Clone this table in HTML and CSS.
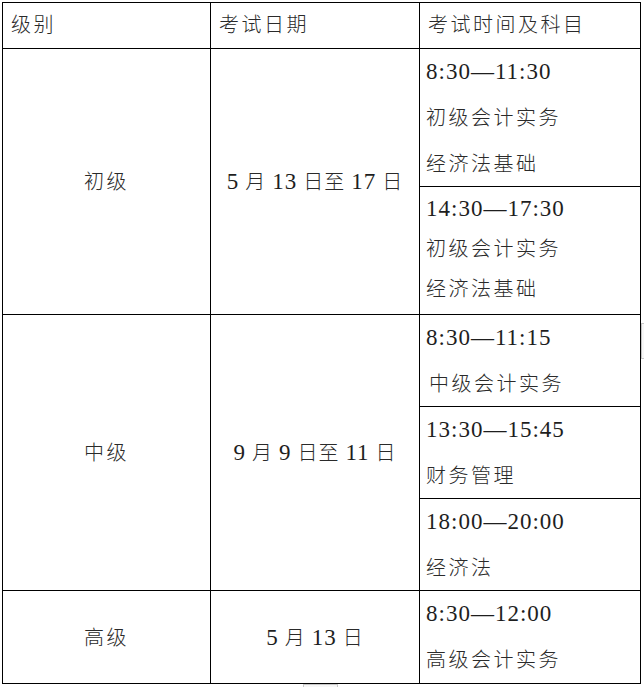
FILE: index.html
```html
<!DOCTYPE html>
<html lang="zh-CN">
<head>
<meta charset="utf-8">
<title>考试时间</title>
<link rel="stylesheet" href="styles.css">
</head>
<body>
<div class="page">
  <div class="sheet">
    <div class="cell head">级别</div>
    <div class="cell head">考试日期</div>
    <div class="cell head">考试时间及科目</div>

    <div class="cell merged span2"><span>初级</span></div>
    <div class="cell merged date span2"><span><span class="num">5</span> 月 <span class="num">13</span> 日至 <span class="num">17</span> 日</span></div>
    <div class="cell slot"><span class="time">8:30—11:30</span><br>初级会计实务<br>经济法基础</div>
    <div class="cell slot tight"><span class="time">14:30—17:30</span><br>初级会计实务<br>经济法基础</div>

    <div class="cell merged span3"><span>中级</span></div>
    <div class="cell merged date span3"><span><span class="num">9</span> 月 <span class="num">9</span> 日至 <span class="num">11</span> 日</span></div>
    <div class="cell slot"><span class="time">8:30—11:15</span><br><span class="indent">中级会计实务</span></div>
    <div class="cell slot"><span class="time">13:30—15:45</span><br>财务管理</div>
    <div class="cell slot"><span class="time">18:00—20:00</span><br>经济法</div>

    <div class="cell merged"><span>高级</span></div>
    <div class="cell merged date"><span><span class="num">5</span> 月 <span class="num">13</span> 日</span></div>
    <div class="cell slot"><span class="time">8:30—12:00</span><br>高级会计实务</div>
  </div>
  <span class="ghost ghost-bottom"></span>
  <span class="ghost ghost-right"></span>
</div>
</body>
</html>
```

FILE: styles.css
```css
html, body {
  margin: 0;
  padding: 0;
  background: #ffffff;
}

.page {
  position: relative;
  width: 644px;
  height: 687px;
  overflow: hidden;
}

.sheet {
  display: grid;
  grid-template-columns: 207px 208px 220px;
  grid-template-rows: 45px 137px 127px 91px 91px 91px 92px;
  gap: 1px;
  padding: 1px;
  background: #000000;
  width: max-content;
  margin: 2px 0 0 2px;
  font-family: "Liberation Serif", "Noto Sans CJK SC", serif;
  font-size: 20px;
  font-weight: 300;
  color: #2a2a2a;
}

.cell {
  background: #ffffff;
  padding: 0 6px;
  letter-spacing: 2.5px;
  white-space: nowrap;
}

.head {
  line-height: 45px;
  padding-left: 8px;
}

.slot {
  line-height: 46px;
}

.slot.tight {
  line-height: 40px;
  padding-top: 2px;
}

.time {
  font-size: 23px;
  letter-spacing: 1px;
  color: #1e1e1e;
}

.num {
  font-size: 23px;
  letter-spacing: 1px;
  color: #1e1e1e;
}

.indent {
  padding-left: 3px;
}

.merged {
  display: flex;
  align-items: center;
  justify-content: center;
  padding: 0 0 2px;
}

.date {
  letter-spacing: 1px;
}

.span2 {
  grid-row: span 2;
}

.span3 {
  grid-row: span 3;
}

.ghost {
  position: absolute;
  box-sizing: border-box;
  border: 1px solid #c8c8c8;
  background: #f7f7f7;
}

.ghost-bottom {
  left: 303px;
  top: 684px;
  width: 35px;
  height: 6px;
  border-bottom: none;
}

.ghost-right {
  left: 641px;
  top: 323px;
  width: 6px;
  height: 36px;
  border-right: none;
}
```
